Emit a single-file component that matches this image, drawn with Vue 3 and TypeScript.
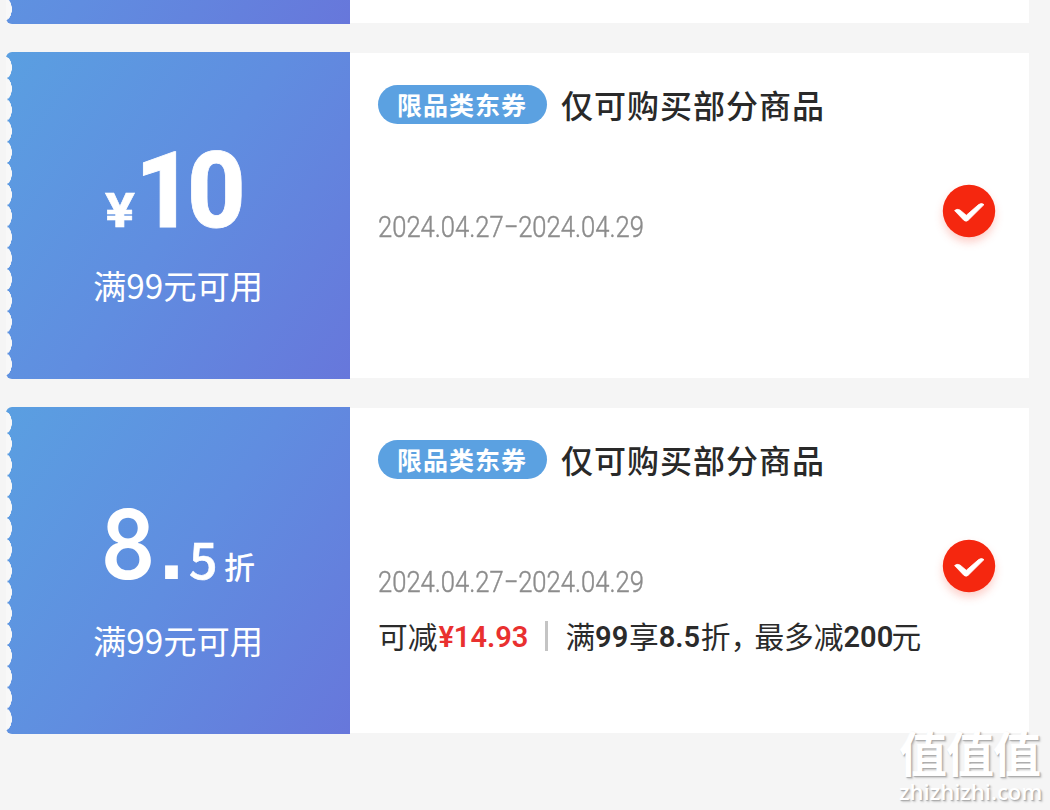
<script setup lang="ts">
interface Coupon {
  id: number
  kind: 'cash' | 'discount'
  whole: string
  fraction?: string
  limit: string
  tag: string
  title: string
  period: [string, string]
  saving?: string
}

const coupons: Coupon[] = [
  {
    id: 1,
    kind: 'cash',
    whole: '10',
    limit: '满99元可用',
    tag: '限品类东券',
    title: '仅可购买部分商品',
    period: ['2024.04.27', '2024.04.29'],
  },
  {
    id: 2,
    kind: 'discount',
    whole: '8',
    fraction: '5',
    limit: '满99元可用',
    tag: '限品类东券',
    title: '仅可购买部分商品',
    period: ['2024.04.27', '2024.04.29'],
    saving: '¥14.93',
  },
]
</script>

<template>
  <main class="page">
    <section class="coupon previous">
      <div class="face"></div>
      <div class="detail"></div>
    </section>

    <section v-for="c in coupons" :key="c.id" class="coupon">
      <div class="face">
        <div v-if="c.kind === 'cash'" class="amount cash">
          <span class="yen">¥</span><span class="ten">{{ c.whole }}</span>
        </div>
        <div v-else class="amount discount">
          <span class="eight">{{ c.whole }}</span><span class="dot">.</span><span class="five">{{ c.fraction }}</span><span class="zhe">折</span>
        </div>
        <div class="limit">{{ c.limit }}</div>
      </div>
      <div class="detail">
        <header class="heading">
          <span class="tag">{{ c.tag }}</span>
          <h2 class="title">{{ c.title }}</h2>
        </header>
        <div class="period"><span>{{ c.period[0] }}</span><span class="dash">-</span><span>{{ c.period[1] }}</span></div>
        <div v-if="c.saving" class="saving">
          <span>可减</span><b class="red">{{ c.saving }}</b>
          <i class="bar"></i>
          <span>满</span><b class="n99">99</b><span>享</span><b class="n85">8.5</b><span>折</span><span class="comma">，</span><span>最多减</span><b class="n200">200</b><span>元</span>
        </div>
        <svg class="check" viewBox="0 0 54 54">
          <circle cx="27" cy="27" r="26.2" fill="#f5270f" />
          <path d="M12.6 26.6 Q15 24.4 18 26 L24.3 31.3 L36.6 20.6 Q39.6 18.4 42 20.6 L26 36.4 Q24.2 38 22 36.4 Z" fill="#fff" stroke="#fff" stroke-width=".8" stroke-linejoin="round" />
        </svg>
      </div>
    </section>

    <div class="watermark">
      <div class="mark">值值值</div>
      <div class="domain">zhizhizhi.com</div>
    </div>
  </main>
</template>

<style>
body {
  margin: 0;
  background: #f5f5f5;
}
</style>

<style scoped>
.page {
  position: relative;
  box-sizing: border-box;
  width: 1050px;
  height: 810px;
  padding: 0 21px 0 6px;
  overflow: hidden;
  background: #f5f5f5;
  font-family: "Noto Sans CJK SC", sans-serif;
  display: flex;
  flex-direction: column;
  gap: 28px;
}
.coupon {
  display: flex;
  flex: none;
  height: 327px;
}
.previous {
  margin-top: -303px;
}
.face {
  position: relative;
  box-sizing: border-box;
  width: 344px;
  border-radius: 6px 0 0 6px;
  background: linear-gradient(124deg, #5a9fe1 0%, #608de0 50%, #6777db 100%);
  color: #fff;
}
.face::before {
  content: "";
  position: absolute;
  left: 0;
  top: 5px;
  width: 7px;
  height: 318px;
  background: radial-gradient(ellipse 6px 10.8px at 0 50%, #f8f8f8 94%, transparent 100%) 0 0 / 7px 21.2px repeat-y;
}
.detail {
  position: relative;
  box-sizing: border-box;
  flex: 1;
  margin: 1px 0;
  padding: 32px 0 0 28px;
  background: #fff;
}
.amount {
  display: flex;
  align-items: baseline;
  height: 203px;
  box-sizing: border-box;
  white-space: nowrap;
  line-height: 120px;
}
.cash {
  padding: 79px 0 0 99px;
  font-family: Roboto, sans-serif;
  font-weight: 700;
}
.yen {
  width: 30px;
  font-size: 48px;
  transform: scaleX(1.16);
  transform-origin: 0 50%;
  -webkit-text-stroke: .6px #fff;
}
.ten {
  font-size: 106px;
  font-weight: 800;
  letter-spacing: -7px;
  transform: scaleX(.96);
  transform-origin: 0 50%;
  -webkit-text-stroke: .8px #fff;
}
.discount {
  padding: 77px 0 0 95px;
  font-weight: 600;
}
.eight {
  width: 58px;
  font-family: Inter, sans-serif;
  font-size: 96px;
  transform: scaleX(.88);
  transform-origin: 0 50%;
}
.dot {
  width: 30px;
  font-family: "Liberation Sans", sans-serif;
  font-size: 90px;
  font-weight: 700;
}
.five {
  width: 35px;
  font-size: 50px;
  font-weight: 500;
  -webkit-text-stroke: .6px #fff;
}
.zhe {
  font-size: 31px;
  font-weight: 500;
}
.limit {
  padding-left: 87px;
  height: 60px;
  line-height: 60px;
  font-size: 33.3px;
  white-space: nowrap;
}
.heading {
  display: flex;
  height: 39px;
  align-items: center;
}
.tag {
  box-sizing: border-box;
  width: 169px;
  height: 39px;
  padding-left: 19px;
  border-radius: 20px;
  background: #5ba1e1;
  color: #fff;
  font-size: 25px;
  font-weight: 700;
  letter-spacing: 1px;
  line-height: 39px;
}
.title {
  margin: 0 0 0 14px;
  color: #292929;
  font-size: 32px;
  font-weight: 500;
  letter-spacing: 1px;
  line-height: 39px;
  white-space: nowrap;
}
.period {
  display: flex;
  width: 300px;
  margin-top: 83px;
  height: 40px;
  line-height: 40px;
  color: #8c8c8c;
  font-family: Roboto, sans-serif;
  font-size: 29px;
  font-weight: 300;
  -webkit-text-stroke: .45px #8c8c8c;
  transform: scaleX(.882);
  transform-origin: 0 50%;
}
.dash {
  transform: translateY(-1px) scaleX(1.7);
  margin: 0 4px;
}
.saving {
  display: flex;
  align-items: center;
  margin-top: 14px;
  height: 40px;
  line-height: 40px;
  color: #2b2b2b;
  font-size: 29.7px;
  white-space: nowrap;
}
.saving b {
  flex: none;
  padding-top: 2px;
  font-family: Roboto, sans-serif;
  font-size: 29px;
  font-weight: 600;
}
.saving .red {
  width: 89px;
  padding-left: 1px;
  color: #e9302f;
}
.bar {
  width: 3px;
  height: 30px;
  margin: 0 17px 0 18px;
  background: #c4c4c4;
}
.n99 { width: 34px; }
.n85 { width: 42px; }
.n200 { width: 48px; }
.comma { width: 24px; }
.check {
  position: absolute;
  left: 591.5px;
  top: 131px;
  width: 54px;
  height: 54px;
  filter: drop-shadow(0 5px 4px rgba(245, 39, 15, .22));
}
.watermark {
  position: absolute;
  left: 899px;
  top: 724px;
  color: #fff;
  white-space: nowrap;
  text-shadow: 1px 1px 1px #aaa, 2px 2px 2px #ccc;
}
.mark {
  height: 55px;
  line-height: 55px;
  font-size: 48px;
  font-weight: 700;
  letter-spacing: -1px;
}
.domain {
  height: 25px;
  line-height: 25px;
  font-family: "Open Sans", sans-serif;
  font-size: 22px;
  font-weight: 600;
}
</style>
